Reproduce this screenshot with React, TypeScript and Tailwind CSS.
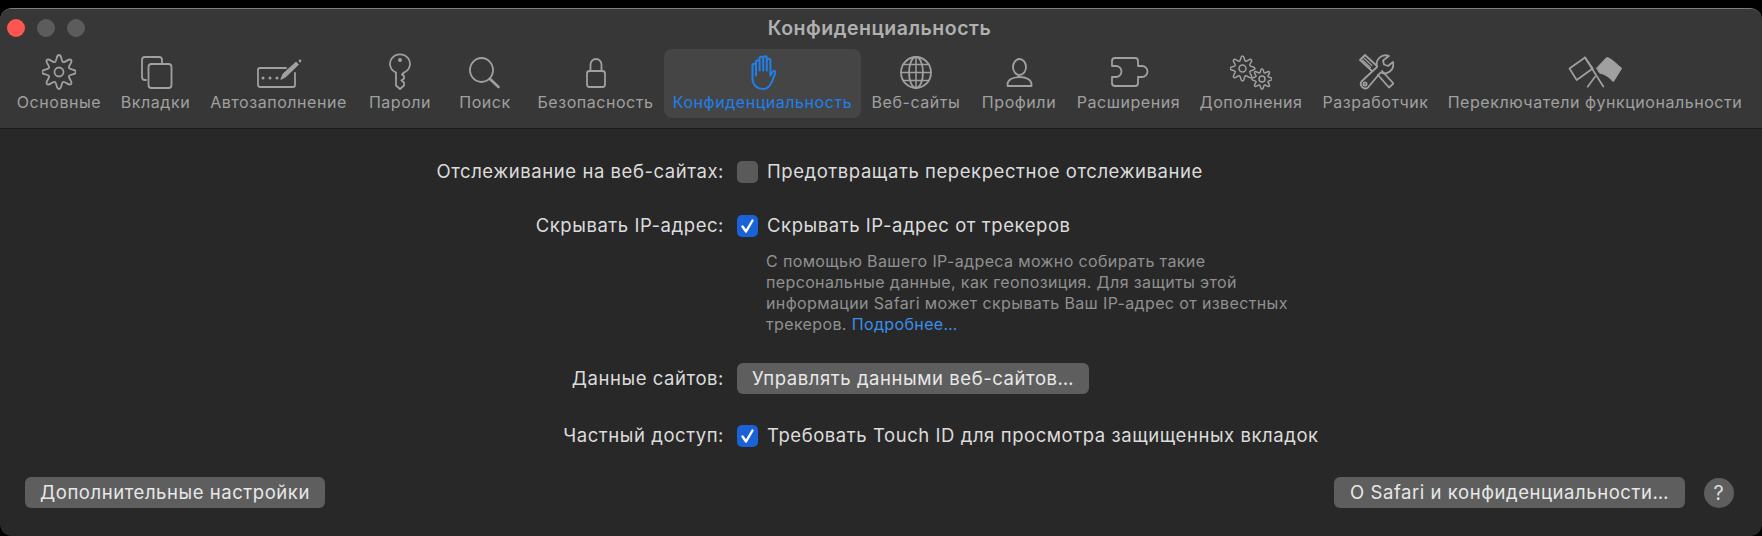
import { ReactNode } from "react";

const font = { fontFamily: '"Inter", "Liberation Sans", sans-serif' };

// rounded cog: vertices are control points, the midpoints sit on the curve
const gearPath = (cx: number, cy: number, r: number, teeth: number) => {
  const n = teeth * 4;
  const pts: [number, number][] = [];
  for (let i = 0; i < n; i++) {
    const a = (i / n) * Math.PI * 2 - Math.PI / 2 - Math.PI / n;
    const rr = i % 4 < 2 ? r * 1.14 : r * 0.72;
    pts.push([cx + Math.cos(a) * rr, cy + Math.sin(a) * rr]);
  }
  const mid = (p: [number, number], q: [number, number]) =>
    `${((p[0] + q[0]) / 2).toFixed(2)} ${((p[1] + q[1]) / 2).toFixed(2)}`;
  let d = `M${mid(pts[n - 1], pts[0])}`;
  pts.forEach((p, i) => {
    d += `Q${p[0].toFixed(2)} ${p[1].toFixed(2)} ${mid(p, pts[(i + 1) % n])}`;
  });
  return d + "Z";
};

const Svg = ({ w, children }: { w: number; children: ReactNode }) => (
  <svg
    width={w}
    height={38}
    viewBox={`0 0 ${w} 38`}
    fill="none"
    stroke="currentColor"
    strokeWidth={1.8}
    strokeLinecap="round"
    strokeLinejoin="round"
  >
    {children}
  </svg>
);

const GearIcon = () => (
  <Svg w={34}>
    <path d={gearPath(17, 20, 15, 8)} />
    <circle cx={17} cy={20} r={4.5} />
  </Svg>
);

const TabsIcon = () => (
  <Svg w={34}>
    <path d="M7 28H6a3 3 0 0 1-3-3V8a3 3 0 0 1 3-3h14a3 3 0 0 1 3 3v4" />
    <rect x={9.5} y={12} width={23} height={24} rx={3} />
  </Svg>
);

const AutofillIcon = () => (
  <Svg w={46}>
    <path d="M39 21V33a2 2 0 0 1-2 2H4a2 2 0 0 1-2-2V18a2 2 0 0 1 2-2H30" />
    <path d="M25 27l2-5 13-12 2.500 2.500-13 12.500z" fill="currentColor" strokeWidth={1} />
    <circle cx={44} cy={9} r={1.4} fill="currentColor" stroke="none" />
    <circle cx={7} cy={26} r={1.5} fill="currentColor" stroke="none" />
    <circle cx={14} cy={26} r={1.5} fill="currentColor" stroke="none" />
    <circle cx={21} cy={26} r={1.5} fill="currentColor" stroke="none" />
  </Svg>
);

const KeyIcon = () => (
  <Svg w={22}>
    <path d="M7 20.500A10 9.500 0 1 1 15 20.500l-2 2 2 1.500v2.500l-2.500 2 2.500 2v3l-4 3.500-4-3.500z" />
    <circle cx={11} cy={8} r={2} fill="currentColor" stroke="none" />
  </Svg>
);

const SearchIcon = () => (
  <Svg w={32}>
    <ellipse cx={12.5} cy={18} rx={11.5} ry={12} />
    <path d="M21 27l8.500 8" strokeWidth={2.6} />
  </Svg>
);

const LockIcon = () => (
  <Svg w={22}>
    <rect x={2} y={19} width={18} height={16} rx={2.5} />
    <path d="M5.500 19V12.500a5.500 5.500 0 0 1 11 0V19" />
  </Svg>
);

const HandIcon = () => (
  <Svg w={26}>
    <g transform="translate(0 2.5)">
      <path
        d="M6 21V7.500a1.800 1.800 0 0 1 3.600 0V16M9.600 16V4a1.800 1.800 0 0 1 3.600 0v12M13.200 16V3.500a1.800 1.800 0 0 1 3.600 0V16M16.800 16V6a1.800 1.800 0 0 1 3.600 0v15l2-3.500c1.500-2 3.800-.8 2.800 1.200l-3.200 8.300C20 32 17 34.500 13 34.500c-5 0-10.500-3-10.500-11V11a1.750 1.750 0 0 1 3.500 0"
        strokeWidth={2}
      />
    </g>
  </Svg>
);

const GlobeIcon = () => (
  <Svg w={32}>
    <ellipse cx={16} cy={20.5} rx={15} ry={15.5} />
    <ellipse cx={16} cy={20.5} rx={7} ry={15.5} />
    <path d="M16 5v31M1 20.500h30M4 12.500h24M4 28.500h24" strokeWidth={1.5} />
  </Svg>
);

const PersonIcon = () => (
  <Svg w={28}>
    <ellipse cx={14.5} cy={15} rx={6.5} ry={8} />
    <path d="M2.500 34v-1.500c0-4.500 5-7.500 12-7.500s12 3 12 7.500V34z" />
  </Svg>
);

const PuzzleIcon = () => (
  <Svg w={42}>
    <path d="M4 14V9a3 3 0 0 1 3-3h20a3 3 0 0 1 3 3v5h4a5.500 5.500 0 0 1 0 11h-4v6a3 3 0 0 1-3 3H7a3 3 0 0 1-3-3v-6h4a5.500 5.500 0 0 0 0-11H4z" />
  </Svg>
);

const GearsIcon = () => (
  <Svg w={42}>
    <path d={gearPath(12.5, 16.5, 11, 8)} strokeWidth={1.5} />
    <circle cx={12.5} cy={16.5} r={3.5} strokeWidth={1.5} />
    <path d={gearPath(32, 27, 9, 8)} strokeWidth={1.5} />
    <circle cx={32} cy={27} r={3} strokeWidth={1.5} />
  </Svg>
);

const ToolsIcon = () => (
  <Svg w={36}>
    <path d="M19 14L7 3 2 8l12 11" />
    <path d="M6 6l8 7.500M4.500 8l8 7.500" strokeWidth={1.1} />
    <path d="M20 23l11 12.500 4.500-4L24 19" />
    <path d="M31 4a9 9 0 0 0-12 11L3.500 29.500a4.500 4.500 0 0 0 6.500 6L22.500 20.500a9 9 0 0 0 12.500-10.500l-5 4-4-1.500-1-4z" />
    <circle cx={7} cy={32} r={1.6} />
  </Svg>
);

const FlagsIcon = () => (
  <Svg w={54}>
    <path d="M1.500 16.500L17 5.500l7.700 11L8.700 28z" strokeWidth={1.7} />
    <path d="M17 5.500l18.300 29M27 24.700L19.700 34.700" strokeWidth={1.7} />
    <path d="M28.700 16L38.700 5.500c5 1 10 7 15 10.800L45.300 29.700C41 25 37 22 32 21.300z" fill="currentColor" strokeWidth={1} />
  </Svg>
);

const tabs = [
  { label: "Основные", icon: <GearIcon />, w: "w-[104px]" },
  { label: "Вкладки", icon: <TabsIcon />, w: "w-[89px]" },
  { label: "Автозаполнение", icon: <AutofillIcon />, w: "w-[157px]" },
  { label: "Пароли", icon: <KeyIcon />, w: "w-[86px]" },
  { label: "Поиск", icon: <SearchIcon />, w: "w-[84px]" },
  { label: "Безопасность", icon: <LockIcon />, w: "w-[137px]" },
  { label: "Конфиденциальность", icon: <HandIcon />, w: "w-[197px]", active: true },
  { label: "Веб-сайты", icon: <GlobeIcon />, w: "w-[110px]" },
  { label: "Профили", icon: <PersonIcon />, w: "w-[96px]" },
  { label: "Расширения", icon: <PuzzleIcon />, w: "w-[123px]" },
  { label: "Дополнения", icon: <GearsIcon />, w: "w-[122px]" },
  { label: "Разработчик", icon: <ToolsIcon />, w: "w-[127px]" },
  { label: "Переключатели функциональности", icon: <FlagsIcon />, w: "w-[312px]" },
];

const Checkbox = ({ checked }: { checked?: boolean }) =>
  checked ? (
    <span className="flex h-[22px] w-[21px] shrink-0 items-center justify-center rounded-[5px] bg-[#1a62d6]">
      <svg width="15" height="16" viewBox="0 0 15 16" fill="none" stroke="#fff" strokeWidth="2.4" strokeLinecap="round" strokeLinejoin="round">
        <path d="M2.500 8.500l3.500 5L12.500 2.500" />
      </svg>
    </span>
  ) : (
    <span className="h-[22px] w-[21px] shrink-0 rounded-[5px] bg-[#5a5a5a]" />
  );

const Row = ({ label, children, className }: { label: string; children: ReactNode; className?: string }) => (
  <div className={`flex items-center ${className ?? ""}`}>
    <div className="w-[724px] shrink-0 text-right">{label}</div>
    <div className="ml-[13px] flex items-center gap-[9px] whitespace-nowrap">{children}</div>
  </div>
);

const Btn = ({ children, className }: { children: ReactNode; className?: string }) => (
  <button className={`h-[31px] whitespace-nowrap rounded-[6px] bg-[#5e5e5e] text-center text-[#e8e8e8] ${className ?? ""}`}>
    {children}
  </button>
);

export default function App() {
  return (
    <div className="h-[536px] w-[1762px] overflow-hidden bg-black pt-[8px]" style={font}>
      <div className="flex h-[528px] flex-col overflow-hidden rounded-[12px] border-t border-[#7d7d7d] bg-[#282828] text-[18.5px] tracking-[0.56px] text-[#dcdcdc]">
        <div className="h-[120px] shrink-0 border-b border-[#1a1a1a] bg-[#373737]">
          <div className="relative flex h-[40px] items-center justify-center">
            <div className="absolute left-[7px] top-[10px] flex gap-[12px]">
              <span className="h-[18px] w-[18px] rounded-full bg-[#ff5652]" />
              <span className="h-[18px] w-[18px] rounded-full bg-[#5c5c5c]" />
              <span className="h-[18px] w-[18px] rounded-full bg-[#5c5c5c]" />
            </div>
            <span className="mr-[3px] text-[19.5px] font-semibold tracking-[0.5px] text-[#b0b0b0]">Конфиденциальность</span>
          </div>
          <div className="ml-[7px] flex h-[69px] text-[16px] tracking-[0.55px] text-[#a0a0a0]">
            {tabs.map((t) => (
              <div
                key={t.label}
                className={`flex shrink-0 flex-col items-center rounded-[8px] pt-[3px] ${t.w} ${t.active ? "bg-[#454545] text-[#1f80ec]" : ""}`}
              >
                {t.icon}
                <span className="mt-[2px] whitespace-nowrap leading-[20px]">{t.label}</span>
              </div>
            ))}
          </div>
        </div>

        <div className="flex flex-1 flex-col">
          <Row label="Отслеживание на веб-сайтах:" className="mt-[32px] h-[22px]">
            <Checkbox />
            <span>Предотвращать перекрестное отслеживание</span>
          </Row>
          <Row label="Скрывать IP-адрес:" className="mt-[32px] h-[22px]">
            <Checkbox checked />
            <span>Скрывать IP-адрес от трекеров</span>
          </Row>
          <div className="ml-[766px] mt-[14px] whitespace-nowrap text-[16px] leading-[21px] tracking-[0.37px] text-[#909090]">
            <p>С помощью Вашего IP-адреса можно собирать такие</p>
            <p>персональные данные, как геопозиция. Для защиты этой</p>
            <p>информации Safari может скрывать Ваш IP-адрес от известных</p>
            <p>
              трекеров. <span className="text-[#3b8eea]">Подробнее…</span>
            </p>
          </div>
          <Row label="Данные сайтов:" className="mt-[28px] h-[31px]">
            <Btn className="w-[352px]">Управлять данными веб-сайтов…</Btn>
          </Row>
          <Row label="Частный доступ:" className="mt-[31px] h-[22px]">
            <Checkbox checked />
            <span>Требовать Touch ID для просмотра защищенных вкладок</span>
          </Row>
          <div className="mt-[30px] flex items-center pl-[25px] pr-[28px]">
            <Btn className="w-[300px]">Дополнительные настройки</Btn>
            <Btn className="ml-auto w-[351px]">О Safari и конфиденциальности…</Btn>
            <span className="ml-[19px] flex h-[30px] w-[30px] items-center justify-center rounded-full bg-[#5e5e5e] text-[20px] text-[#dcdcdc]">?</span>
          </div>
        </div>
      </div>
    </div>
  );
}
